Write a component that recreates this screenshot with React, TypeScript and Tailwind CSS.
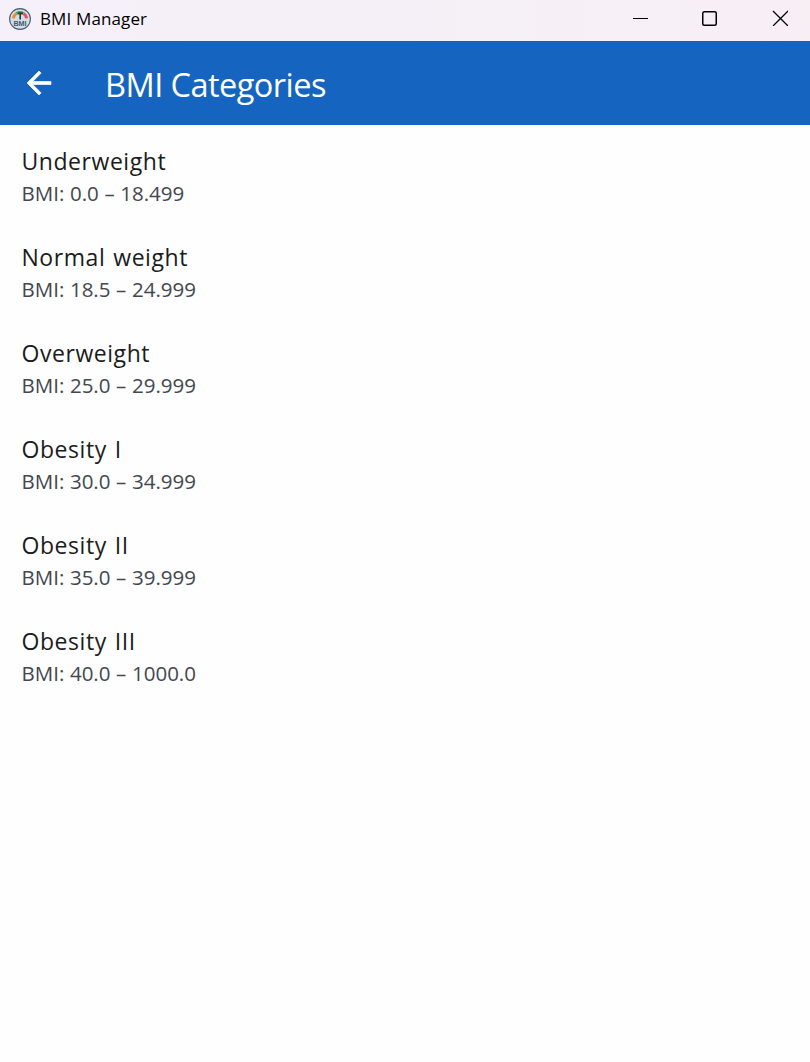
const categories = [
  { name: 'Underweight', range: '0.0 – 18.499' },
  { name: 'Normal weight', range: '18.5 – 24.999' },
  { name: 'Overweight', range: '25.0 – 29.999' },
  { name: 'Obesity I', range: '30.0 – 34.999' },
  { name: 'Obesity II', range: '35.0 – 39.999' },
  { name: 'Obesity III', range: '40.0 – 1000.0' },
];

function AppIcon() {
  return (
    <svg viewBox="0 0 22 22" className="h-[22px] w-[22px] shrink-0">
      <circle cx="11" cy="11" r="10.4" fill="#d3dfe7" stroke="#4d5b6b" strokeWidth="1.1" />
      <path d="M4.4 10.4A6.6 6.6 0 0 1 7.4 5.6" fill="none" stroke="#ee8a3a" strokeWidth="3" />
      <path d="M7.4 5.6A6.6 6.6 0 0 1 14.2 5.4" fill="none" stroke="#4f9a4c" strokeWidth="3" />
      <path d="M14.4 5.5A6.6 6.6 0 0 1 17.6 10.4" fill="none" stroke="#ea5055" strokeWidth="3" />
      <path d="M9 5.4h5M11.2 5v6.5" fill="none" stroke="#22384c" strokeWidth="1.6" />
      <text x="11" y="18.2" textAnchor="middle" fontSize="7.2" fontWeight="700" fontFamily="Liberation Sans, sans-serif" fill="#44566b">BMI</text>
    </svg>
  );
}

function TitleBar() {
  return (
    <header className="flex h-[41px] items-start justify-between bg-linear-to-r from-[#f5f0f9] via-[#f5f0f7] to-[#f8eff5] text-black">
      <div className="flex items-center gap-[9px] pt-[7px] pl-[9px]">
        <AppIcon />
        <span className="pt-px text-[17px] leading-[22px] tracking-[0.13px]">BMI Manager</span>
      </div>
      <div className="flex items-center gap-[53px] pt-[10px] pr-[22px]">
        <svg viewBox="0 0 16 16" className="h-4 w-4"><path d="M0 8.5h15" stroke="#000" /></svg>
        <svg viewBox="0 0 16 16" className="h-4 w-4"><rect x="0.75" y="1.75" width="13.5" height="13.5" rx="1.5" fill="none" stroke="#000" strokeWidth="1.5" /></svg>
        <svg viewBox="0 0 16 16" className="ml-[1px] h-4 w-4"><path d="M1 1l15 15M16 1L1 16" stroke="#000" strokeWidth="1.3" /></svg>
      </div>
    </header>
  );
}

export default function App() {
  return (
    <div className="flex h-[1062px] w-[810px] flex-col bg-[#fefefe] font-['Open_Sans',sans-serif]">
      <TitleBar />
      <div className="flex h-[84px] items-center bg-[#1565c0] pl-[21px] text-white">
        <svg viewBox="0 0 24 24" className="h-9 w-9" fill="#fff" stroke="#fff" strokeWidth="0.45">
          <path d="M20 11H7.83l5.59-5.59L12 4l-8 8 8 8 1.41-1.41L7.83 13H20v-2z" />
        </svg>
        <h1 className="pt-[3px] pl-[48px] text-[32.5px] leading-[43px] tracking-[-0.55px]">BMI Categories</h1>
      </div>
      <ul className="flex flex-col pt-[18px] pl-[21.5px]">
        {categories.map((c) => (
          <li key={c.name} className="h-24">
            <div className="text-[23px] leading-9 tracking-[0.55px] [word-spacing:1.5px] text-[#1a1c20]">{c.name}</div>
            <div className="text-[20.5px] leading-7 tracking-[0px] [word-spacing:0.3px] text-[#43474e]">BMI: {c.range}</div>
          </li>
        ))}
      </ul>
    </div>
  );
}
